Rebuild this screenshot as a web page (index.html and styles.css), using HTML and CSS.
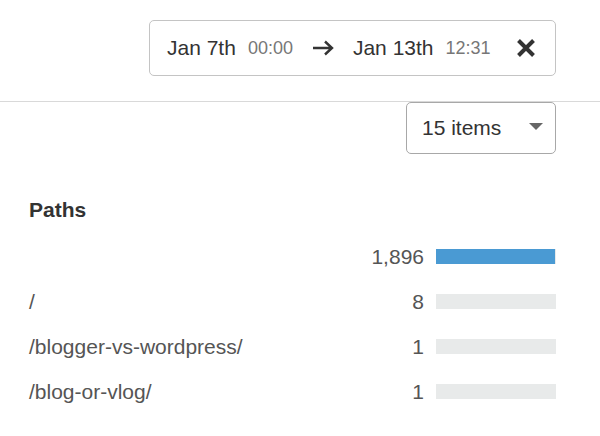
FILE: index.html
```html
<!DOCTYPE html>
<html>
<head>
<meta charset="utf-8">
<link rel="stylesheet" href="styles.css">
</head>
<body>
<header class="top">
  <div class="range">
    <span class="date">Jan 7th</span>
    <span class="time">00:00</span>
    <svg class="arrow" width="22" height="16" viewBox="0 0 22 16"><path d="M1 8H20M13 1.5L20 8L13 14.5" fill="none" stroke="#333" stroke-width="2.4"/></svg>
    <span class="date">Jan 13th</span>
    <span class="time">12:31</span>
    <svg class="close" width="20" height="20" viewBox="0 0 20 20"><path d="M2.5 2.5L17.5 17.5M17.5 2.5L2.5 17.5" stroke="#333" stroke-width="4"/></svg>
  </div>
</header>
<div class="controls">
  <div class="select">
    <span>15 items</span>
    <svg class="caret" width="14" height="8" viewBox="0 0 14 8"><path d="M0 0H14L7 7Z" fill="#666"/></svg>
  </div>
</div>
<section class="paths">
  <h2>Paths</h2>
  <div class="row"><span class="label"></span><span class="num">1,896</span><span class="bar"><span class="fill" style="width:99%"></span></span></div>
  <div class="row"><span class="label">/</span><span class="num">8</span><span class="bar"><span class="fill" style="width:0%"></span></span></div>
  <div class="row"><span class="label">/blogger-vs-wordpress/</span><span class="num">1</span><span class="bar"><span class="fill" style="width:0%"></span></span></div>
  <div class="row"><span class="label">/blog-or-vlog/</span><span class="num">1</span><span class="bar"><span class="fill" style="width:0%"></span></span></div>
</section>
</body>
</html>
```
FILE: styles.css
```css
html, body {
  margin: 0;
  padding: 0;
  background: #fff;
}
body {
  font-family: "Liberation Sans", Arial, sans-serif;
  color: #333;
  font-size: 21px;
  width: 600px;
}
.top {
  display: flex;
  justify-content: flex-end;
  padding: 20px 44px 25px 0;
  border-bottom: 1px solid #d9d9d9;
}
.range {
  box-sizing: border-box;
  width: 407px;
  height: 56px;
  border: 1px solid #c4c4c4;
  border-radius: 5px;
  display: flex;
  align-items: center;
  padding: 0 19px 0 17px;
}
.date {
  color: #333;
  font-size: 21px;
}
.time {
  color: #777;
  font-size: 18px;
  margin-left: 12px;
}
.arrow {
  margin: 0 19px 0 19px;
}
.close {
  margin-left: auto;
}
.controls {
  display: flex;
  justify-content: flex-end;
  padding-right: 44px;
}
.select {
  box-sizing: border-box;
  width: 150px;
  height: 52px;
  border: 1px solid #a8a8a8;
  border-radius: 5px;
  display: flex;
  align-items: center;
  padding: 0 12px 0 15px;
  color: #333;
}
.caret {
  margin-left: auto;
  margin-top: -2px;
}
.paths {
  padding: 40px 44px 0 29px;
}
.paths h2 {
  margin: 0 0 8px 0;
  font-size: 21px;
  font-weight: bold;
  color: #333;
  line-height: 32px;
}
.row {
  display: flex;
  align-items: center;
  height: 45px;
  color: #555;
}
.label {
  flex: 1;
}
.num {
  text-align: right;
  margin-right: 12px;
}
.bar {
  width: 120px;
  height: 15px;
  background: #e8eaea;
  display: flex;
}
.fill {
  background: #4a9ad3;
  height: 100%;
}
```
